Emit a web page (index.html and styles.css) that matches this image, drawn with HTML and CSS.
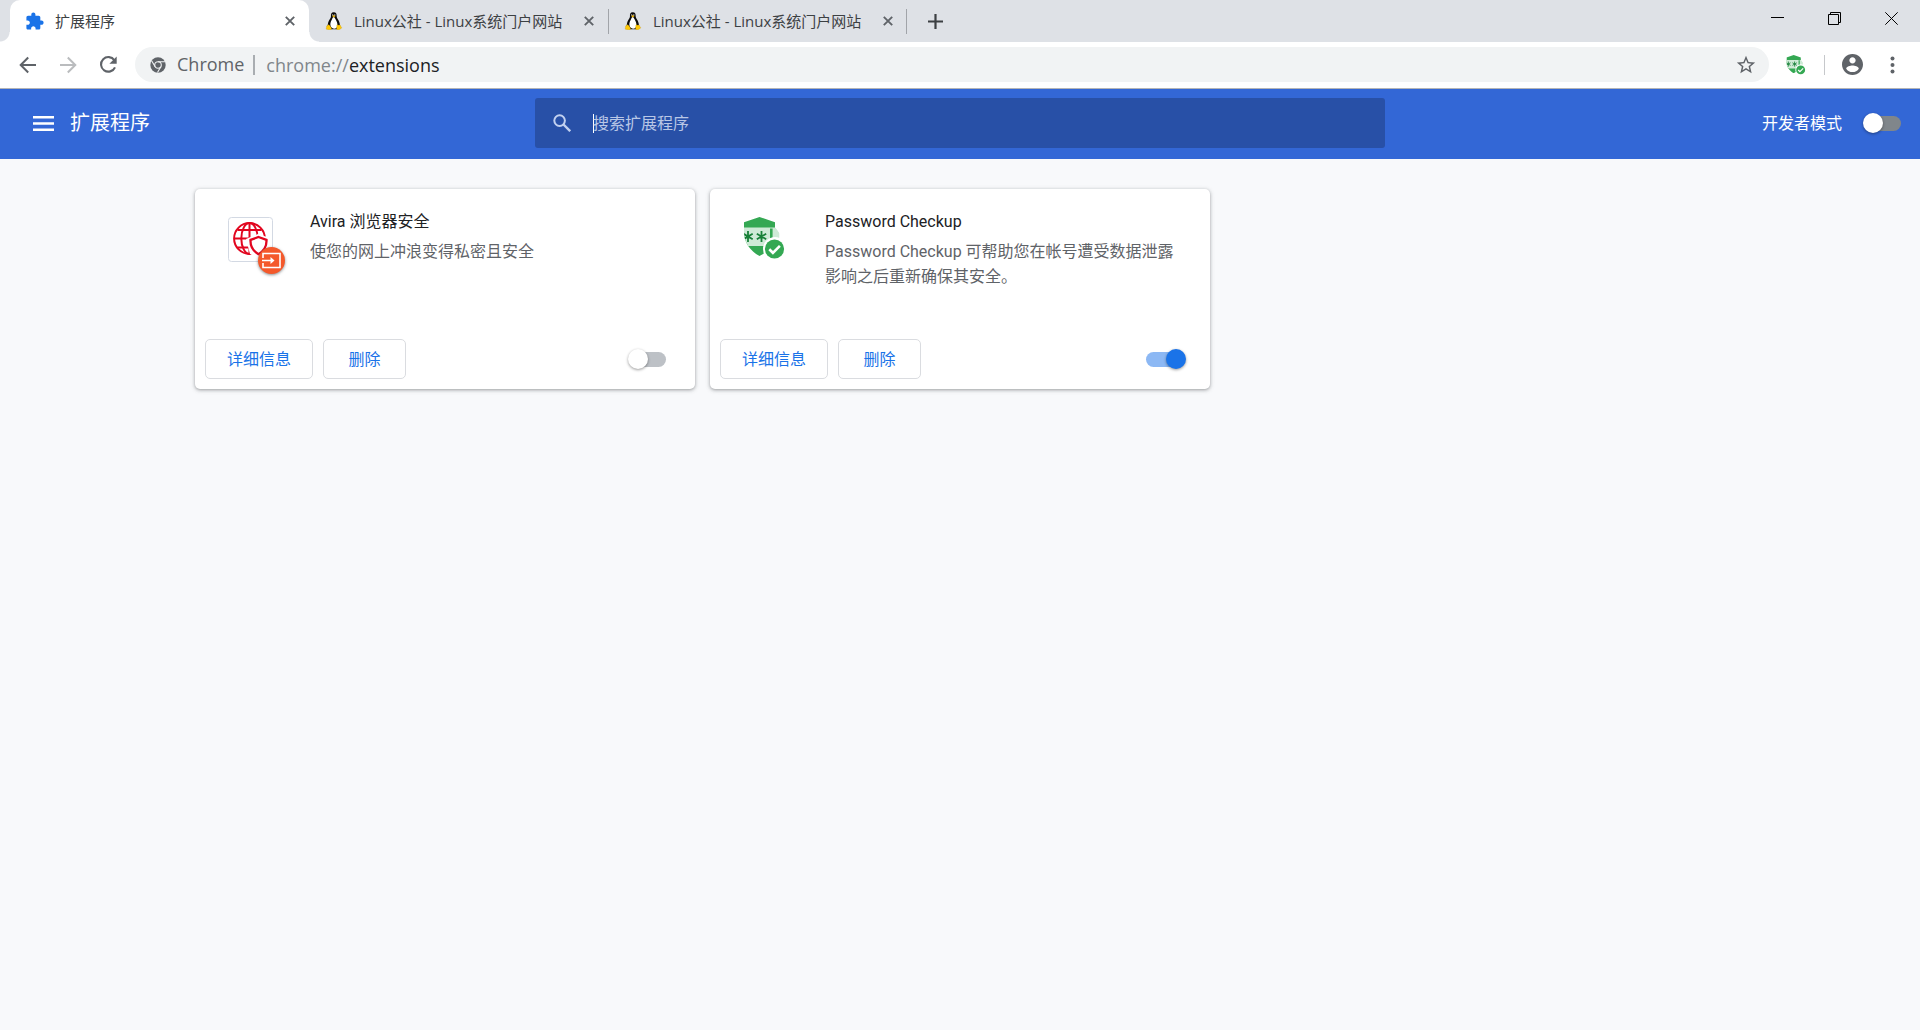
FILE: index.html
```html
<!DOCTYPE html>
<html lang="zh-CN">
<head>
<meta charset="utf-8">
<meta name="viewport" content="width=device-width, initial-scale=1">
<title>扩展程序</title>
<link rel="stylesheet" href="styles.css">
</head>
<body>
<svg class="sprite" aria-hidden="true">
  <symbol id="close" viewBox="0 0 10 10"><path d="M.8.8l8.400 8.400M9.200.8L.8 9.200" fill="none" stroke="#5f6368" stroke-width="1.900"/></symbol>
  <symbol id="tux" viewBox="1 .5 16.500 18.700">
    <path d="M9 .8C6.400.8 5.900 2.800 6.100 5c.1 1.900-1.600 3.300-2.500 5.300-.6 1.400-.7 3.300-1.100 4.500l3.500 3.700h6.400l3-3.300c.1-2-.4-4.200-1.500-6.100-1.200-1.900-1.900-2.800-1.900-4.600C12 2.300 11.400.8 9 .8z" fill="#0b0b0b"/>
    <path d="M8.700 5.600c-1 .2-1.200 1.900-2 3.500-.8 1.500-1.400 3.200-1.200 5 .2 2.300 1.700 3.700 3.800 3.700 2.200 0 3.500-1.300 3.500-3.900 0-2.500-.9-4.200-1.800-5.700-.6-1-1-2.500-2.300-2.600z" fill="#fff"/>
    <path d="M7.200 4.600l1.900-.9 1.800.9-1.700 1.500z" fill="#f0b400"/>
    <circle cx="7.900" cy="3.500" r=".7" fill="#ddd"/><circle cx="10.100" cy="3.500" r=".7" fill="#ddd"/>
    <path d="M3.300 13.700c.9-.4 1.500.7 2.300 1.800.9 1.300 1.600 2.500.6 3.200-.9.600-2.400.2-3.500 0-1-.2-2-.2-1.500-1.100 0-.6.400-1 .3-1.700-.1-.9.300-1.100 1-1.300.4-.2.400-.6.800-.9zM12.400 14c.5-.5 1.300.3 2 .3.700-.1 1.200-.5 1.600.2.300.6.200 1.100.7 1.600.6.600.8 1 0 1.500-1 .6-1.400.8-2.100 1.200-.9.400-2.300.2-2.600-.5-.3-1 .2-2.100.2-3 0-.6-.1-1 .2-1.300z" fill="#ffc907" stroke="#b98700" stroke-width=".3"/>
  </symbol>
  <symbol id="checkup" viewBox="0 0 45 45">
    <clipPath id="shield"><path d="M1 5.200L16.500 0 32 5.200v4.500l4.500 6.500-.5 8L27 33 16.500 39C7 34 1 25 1 15z"/></clipPath>
    <g clip-path="url(#shield)">
      <path d="M0 0h32v40H0z" fill="#34a853"/>
      <path d="M0 10.500h32c4 2 5 6 5 12L28 29H0z" fill="#ceead6"/>
      <path d="M27 11.500h2.600v11H27z" fill="#34a853"/>
      <path d="M5 14v11M.3 16.700l9.400 5.600M9.700 16.700L.3 22.300M18.500 14v11M13.800 16.700l9.400 5.600M23.200 16.700l-9.400 5.600" stroke="#188038" stroke-width="1.800"/>
    </g>
    <circle cx="32" cy="32" r="12" fill="#fff"/><circle cx="31.500" cy="32" r="9.600" fill="#34a853"/>
    <path d="M26.300 32.300l3.600 3.500 7-7" fill="none" stroke="#fff" stroke-width="2.600"/>
  </symbol>
</svg>

<header class="browser">
  <div class="tabstrip">
    <div class="tabs">
      <div class="tab tab-active">
        <svg class="favicon" viewBox="1.500 .5 22 22"><path fill="#1a73e8" d="M20.500 11H19V7c0-1.100-.9-2-2-2h-4V3.500C13 2.120 11.880 1 10.500 1S8 2.120 8 3.500V5H4c-1.100 0-1.990.9-1.990 2v3.800H3.500c1.490 0 2.700 1.210 2.700 2.700s-1.210 2.700-2.700 2.700H2V20c0 1.100.9 2 2 2h3.800v-1.500c0-1.490 1.210-2.700 2.700-2.700s2.700 1.210 2.700 2.700V22H17c1.100 0 2-.9 2-2v-4h1.500c1.380 0 2.500-1.120 2.500-2.500S21.880 11 20.500 11z"/></svg>
        <span class="tab-title">扩展程序</span>
        <button class="tab-close" type="button" aria-label="关闭"><svg><use href="#close"/></svg></button>
      </div>
      <div class="tab">
        <svg class="favicon"><use href="#tux"/></svg>
        <span class="tab-title">Linux公社 - Linux系统门户网站</span>
        <button class="tab-close" type="button" aria-label="关闭"><svg><use href="#close"/></svg></button>
      </div>
      <div class="tab tab-divided">
        <svg class="favicon"><use href="#tux"/></svg>
        <span class="tab-title">Linux公社 - Linux系统门户网站</span>
        <button class="tab-close" type="button" aria-label="关闭"><svg><use href="#close"/></svg></button>
      </div>
    </div>
    <button class="new-tab" type="button" aria-label="新标签页"><svg viewBox="0 0 15 15"><path d="M7.500 0v15M0 7.500h15" stroke="#3c4043" stroke-width="2.200"/></svg></button>
    <div class="window-controls">
      <button type="button" aria-label="最小化"><svg viewBox="0 0 13 13"><path d="M0 5.500h13" stroke="#000"/></svg></button>
      <button type="button" aria-label="还原"><svg viewBox="0 0 13 13"><path d="M.5 2.500h10v10H.5zM2.500 2.500v-2h10v10h-2" fill="none" stroke="#000"/></svg></button>
      <button type="button" aria-label="关闭"><svg viewBox="0 0 13 13"><path d="M.3.3l12.400 12.400M12.700.3L.3 12.700" stroke="#000"/></svg></button>
    </div>
  </div>

  <div class="toolbar">
    <div class="nav">
      <button type="button" aria-label="后退"><svg viewBox="0 0 20 20"><path d="M18 10H3M10.200 2.500L2.700 10l7.500 7.500" fill="none" stroke="#5f6368" stroke-width="2"/></svg></button>
      <button type="button" aria-label="前进" disabled><svg viewBox="0 0 20 20"><path d="M2 10h15M9.800 2.500l7.500 7.500-7.500 7.500" fill="none" stroke="#babcbe" stroke-width="2"/></svg></button>
      <button type="button" aria-label="重新加载"><svg viewBox="0 0 20 20"><path d="M16.400 5.300A7.300 7.300 0 1 0 17 12.300" fill="none" stroke="#5f6368" stroke-width="2.100"/><path d="M18.700 1.500v7.300h-7.300z" fill="#5f6368"/></svg></button>
    </div>
    <div class="omnibox">
      <button class="site" type="button">
        <svg viewBox="0 0 16 16"><circle cx="8" cy="8" r="7.700" fill="#5f6368"/><circle cx="8" cy="8" r="3.300" fill="none" stroke="#f1f3f4" stroke-width="1.100"/><path d="M8 4.700h7M5.200 9.700L1.600 3.700M10.800 9.700L7.500 15.500" stroke="#f1f3f4" stroke-width="1.100"/></svg>
        Chrome
      </button>
      <div class="url" role="textbox" aria-label="地址栏" tabindex="0"><span>chrome://</span>extensions</div>
      <button class="star" type="button" aria-label="为此网页添加书签"><svg viewBox="0 0 24 24"><path fill="#5f6368" d="M22 9.240l-7.190-.62L12 2 9.190 8.630 2 9.240l5.460 4.730L5.820 21 12 17.270 18.180 21l-1.630-7.030L22 9.240zM12 15.400l-3.760 2.270 1-4.280-3.320-2.880 4.380-.38L12 6.100l1.710 4.040 4.380.38-3.320 2.880 1 4.280L12 15.400z"/></svg></button>
    </div>
    <button class="ext" type="button" aria-label="Password Checkup"><svg viewBox="0 0 43 43"><use href="#checkup" width="45" height="45"/></svg></button>
    <span class="divider"></span>
    <button class="profile" type="button" aria-label="用户"><svg viewBox="2 2 20 20"><path fill="#5f6368" d="M12 2C6.480 2 2 6.480 2 12s4.480 10 10 10 10-4.480 10-10S17.520 2 12 2zm0 3c1.660 0 3 1.340 3 3s-1.340 3-3 3-3-1.340-3-3 1.340-3 3-3zm0 14.200c-2.500 0-4.710-1.280-6-3.220.03-1.990 4-3.080 6-3.080s5.970 1.090 6 3.080c-1.290 1.940-3.500 3.220-6 3.220z"/></svg></button>
    <button class="more" type="button" aria-label="菜单"><svg viewBox="0 0 5 18"><g fill="#5f6368"><circle cx="2.500" cy="2.500" r="2"/><circle cx="2.500" cy="9" r="2"/><circle cx="2.500" cy="15.500" r="2"/></g></svg></button>
  </div>
</header>

<div class="app-bar">
  <div class="app-side">
    <button class="menu" type="button" aria-label="主菜单"><svg viewBox="0 0 21 15"><path d="M0 1.250h21M0 7.500h21M0 13.750h21" stroke="#fff" stroke-width="2.500"/></svg></button>
    <h1>扩展程序</h1>
  </div>
  <label class="search">
    <svg viewBox="0 0 18 18"><circle cx="6.600" cy="6.600" r="5.300" fill="none" stroke="#c2d1f0" stroke-width="2"/><path d="M10.500 10.500l6.700 6.700" stroke="#c2d1f0" stroke-width="2.400"/></svg>
    <span class="caret"></span>
    <input type="search" placeholder="搜索扩展程序" aria-label="搜索扩展程序">
  </label>
  <label class="dev-mode">
    <span>开发者模式</span>
    <input class="toggle toggle-dark" type="checkbox">
  </label>
</div>

<main class="cards">
  <article class="card">
    <div class="card-body">
      <div class="card-icon">
        <svg viewBox="0 0 45 45">
          <rect x=".5" y=".5" width="44" height="44" rx="3" fill="#fff" stroke="#d3d9e3"/>
          <g fill="none" stroke="#e2061f" stroke-width="2">
            <circle cx="21.500" cy="21.500" r="15.400"/><path d="M21.500 6v31M6 21.500h31M9.500 13h24M9.500 30.500h24"/><ellipse cx="21.500" cy="21.500" rx="8.200" ry="15.400"/>
          </g>
          <path d="M30 17l12 4v11L31 42l-9-5-4-15z" fill="#fff"/>
          <path d="M30.500 20l8 2.900c.3 6.500-2 11-8 14.300-6-3.300-8.300-7.800-8-14.300z" fill="#fff" stroke="#e2061f" stroke-width="2.300"/>
        </svg>
        <span class="badge"><svg viewBox="0 0 21 17"><path d="M2 6V1.500h17v14H2V11M1 8.500h10.500" fill="none" stroke="#fff" stroke-width="1.600"/><path d="M9.500 5l4 3.500-4 3.500z" fill="#fff"/></svg></span>
      </div>
      <div class="card-text">
        <h2>Avira 浏览器安全</h2>
        <p>使您的网上冲浪变得私密且安全</p>
      </div>
    </div>
    <div class="card-actions">
      <button type="button">详细信息</button>
      <button type="button">删除</button>
      <input class="toggle" type="checkbox" aria-label="启用 Avira 浏览器安全">
    </div>
  </article>
  <article class="card">
    <div class="card-body">
      <div class="card-icon"><svg><use href="#checkup"/></svg></div>
      <div class="card-text">
        <h2>Password Checkup</h2>
        <p>Password Checkup 可帮助您在帐号遭受数据泄露影响之后重新确保其安全。</p>
      </div>
    </div>
    <div class="card-actions">
      <button type="button">详细信息</button>
      <button type="button">删除</button>
      <input class="toggle" type="checkbox" aria-label="启用 Password Checkup" checked>
    </div>
  </article>
</main>
</body>
</html>
```
FILE: styles.css
```css
* {
  box-sizing: border-box;
}

body {
  margin: 0;
  min-height: 100vh;
  background: #f8f9fb;
  color: #202124;
  font: 16px/25px Roboto, "Noto Sans CJK SC", sans-serif;
}

button {
  display: flex;
  align-items: center;
  justify-content: center;
  flex: none;
  padding: 0;
  border: 0;
  background: none;
  color: inherit;
  font: inherit;
}

svg {
  display: block;
  flex: none;
}

h1,
h2,
p {
  margin: 0;
  font-weight: 400;
}

.sprite {
  position: absolute;
  width: 0;
  height: 0;
}

/* Browser frame */
.browser {
  border-bottom: 1px solid #b3b4b6;
  background: #fff;
  font-family: "Open Sans", "Noto Sans CJK SC", sans-serif;
}

.tabstrip {
  display: flex;
  height: 42px;
  padding-left: 10px;
  background: #dee1e6;
}

.tabs {
  display: flex;
  flex: 0 1 897px;
  min-width: 0;
}

.tab {
  position: relative;
  display: flex;
  align-items: center;
  flex: 1 1 0;
  min-width: 0;
  padding: 0 9px 0 16px;
  color: #3c4043;
  font-size: 15px;
}

.tab-active {
  border-radius: 10px 10px 0 0;
  background: #fff;
}

.tab-active::before,
.tab-active::after {
  content: "";
  position: absolute;
  bottom: 0;
  width: 10px;
  height: 10px;
}

.tab-active::before {
  right: 100%;
  background: radial-gradient(circle at 0 0, #dee1e6 9px, #fff 10px);
}

.tab-active::after {
  left: 100%;
  background: radial-gradient(circle at 100% 0, #dee1e6 9px, #fff 10px);
}

.tab-divided {
  background:
    linear-gradient(#a1a4a9, #a1a4a9) 0 9px / 1px 25px no-repeat,
    linear-gradient(#a1a4a9, #a1a4a9) 100% 9px / 1px 25px no-repeat;
}

.favicon {
  width: 18px;
  height: 18px;
}

.tab-title {
  flex: 1;
  min-width: 0;
  margin-left: 11px;
  overflow: hidden;
  white-space: nowrap;
}

.tab-close {
  width: 20px;
  height: 20px;
}

.tab-close svg {
  width: 10px;
  height: 10px;
}

.new-tab {
  width: 56px;
}

.new-tab svg {
  width: 15px;
  height: 15px;
}

.window-controls {
  display: flex;
  margin-left: auto;
}

.window-controls button {
  width: 57px;
  height: 37px;
}

.window-controls svg {
  width: 13px;
  height: 13px;
}

.toolbar {
  display: flex;
  align-items: center;
  height: 46px;
  padding: 0 18px 1px 8px;
}

.nav {
  display: flex;
  width: 127px;
}

.nav button {
  width: 40px;
  height: 40px;
}

.nav svg {
  width: 20px;
  height: 20px;
}

.omnibox {
  display: flex;
  align-items: center;
  flex: 1;
  min-width: 0;
  height: 35px;
  padding: 0 12px 0 15px;
  border-radius: 18px;
  background: #f1f3f4;
  font-size: 18px;
}

.site {
  gap: 11px;
  height: 20px;
  padding-right: 9px;
  border-right: 2px solid #a9adb1;
  color: #5f6368;
}

.site svg {
  width: 16px;
  height: 16px;
}

.url {
  flex: 1;
  min-width: 0;
  padding-left: 11px;
  overflow: hidden;
  color: #202124;
  line-height: 24px;
  white-space: nowrap;
}

.url span {
  color: #80868b;
}

.star svg {
  width: 22px;
  height: 22px;
}

.ext {
  margin-left: 17px;
}

.ext svg {
  width: 20px;
  height: 20px;
}

.divider {
  width: 1px;
  height: 20px;
  margin: 0 17px 0 18px;
  background: #c6c8cb;
}

.profile svg {
  width: 21px;
  height: 21px;
}

.more {
  width: 20px;
  margin-left: 19px;
}

.more svg {
  width: 5px;
  height: 18px;
}

/* Page header */
.app-bar {
  display: grid;
  grid-template-columns: 1fr minmax(200px, 850px) 1fr;
  align-items: center;
  height: 70px;
  padding-bottom: 2px;
  background: #3367d6;
  color: #fff;
}

.app-side {
  display: flex;
  align-items: center;
  gap: 16px;
  padding-left: 33px;
}

.menu svg {
  width: 21px;
  height: 15px;
}

h1 {
  font-size: 20px;
  white-space: nowrap;
}

.search {
  display: flex;
  align-items: center;
  height: 50px;
  padding: 0 18px;
  border-radius: 3px;
  background: #2850a7;
}

.search svg {
  width: 18px;
  height: 18px;
}

.caret {
  width: 1px;
  height: 19px;
  margin: 0 -1px 0 22px;
  background: #fff;
}

.search input {
  flex: 1;
  min-width: 0;
  padding: 0;
  border: 0;
  outline: 0;
  background: none;
  color: #fff;
  font: inherit;
}

.search input::placeholder {
  color: #b9c7e6;
}

.dev-mode {
  display: flex;
  align-items: center;
  justify-content: flex-end;
  gap: 24px;
  padding-right: 19px;
  white-space: nowrap;
}

/* Extension cards */
.cards {
  display: grid;
  grid-template-columns: repeat(auto-fill, 500px);
  gap: 15px;
  max-width: 1530px;
  margin: 0 auto;
  padding-top: 30px;
}

.card {
  display: flex;
  flex-direction: column;
  justify-content: space-between;
  min-height: 200px;
  border-radius: 5px;
  background: #fff;
  box-shadow: 0 1px 3px rgba(60, 64, 67, 0.35), 0 1px 4px 1px rgba(60, 64, 67, 0.15);
}

.card-body {
  display: flex;
  gap: 37px;
  padding: 20px 25px 0 33px;
}

.card-icon {
  position: relative;
  flex: none;
  width: 45px;
  height: 45px;
  margin-top: 8px;
}

.card-icon > svg {
  width: 45px;
  height: 45px;
}

.badge {
  position: absolute;
  right: -12px;
  bottom: -12px;
  display: flex;
  align-items: center;
  justify-content: center;
  width: 27px;
  height: 27px;
  border-radius: 50%;
  background: #f4592b;
  box-shadow: 0 1px 3px rgba(60, 64, 67, 0.6);
}

.badge svg {
  width: 21px;
  height: 17px;
}

.card-text {
  flex: 1;
  min-width: 0;
}

h2 {
  margin-bottom: 5px;
  font-size: 16px;
}

.card-text p {
  color: #5f6368;
}

.card-actions {
  display: flex;
  align-items: center;
  gap: 10px;
  padding: 10px 29px 10px 10px;
}

.card-actions button {
  min-width: 83px;
  height: 40px;
  padding: 0 21px;
  border: 1px solid #dadce0;
  border-radius: 5px;
  color: #1a73e8;
}

.toggle {
  position: relative;
  flex: none;
  width: 35px;
  height: 15px;
  margin: 0;
  border-radius: 8px;
  background: #bdc1c6;
  appearance: none;
}

.card-actions .toggle {
  margin-left: auto;
}

.toggle::before {
  content: "";
  position: absolute;
  top: -3px;
  left: -3px;
  width: 20px;
  height: 20px;
  border-radius: 50%;
  background: #fff;
  box-shadow: 0 1px 3px rgba(0, 0, 0, 0.4);
}

.toggle-dark {
  background: #80868b;
}

.toggle:checked {
  background: #8cb8f4;
}

.toggle:checked::before {
  left: 20px;
  background: #1a73e8;
}
```
